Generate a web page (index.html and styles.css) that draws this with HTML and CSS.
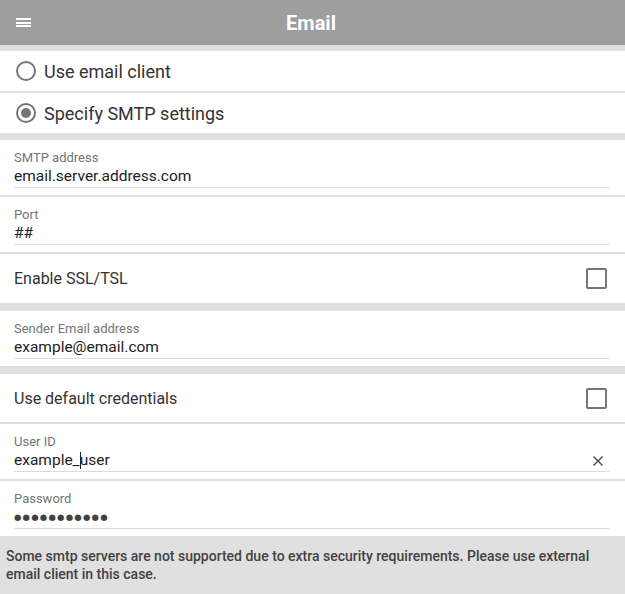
FILE: index.html
```html
<!DOCTYPE html>
<html>
<head>
<meta charset="utf-8">
<title>Email</title>
<link rel="stylesheet" href="styles.css">
</head>
<body>
<div class="app">
  <div class="topbar">
    <span class="menu"><i></i><i></i><i></i></span>
    <h1>Email</h1>
  </div>

  <div class="group first">
    <label class="radio-row"><span class="radio"></span>Use email client</label>
    <label class="radio-row"><span class="radio on"></span>Specify SMTP settings</label>
  </div>

  <div class="group tight">
    <div class="field">
      <div class="lbl">SMTP address</div>
      <div class="val">email.server.address.com</div>
    </div>
    <div class="field">
      <div class="lbl">Port</div>
      <div class="val">##</div>
    </div>
    <div class="check-row">Enable SSL/TSL<span class="box"></span></div>
  </div>

  <div class="group">
    <div class="field">
      <div class="lbl">Sender Email address</div>
      <div class="val">example@email.com</div>
    </div>
  </div>

  <div class="group">
    <div class="check-row short">Use default credentials<span class="box"></span></div>
    <div class="field">
      <div class="lbl">User ID</div>
      <div class="val">example_<span class="caret"></span>user<span class="clear">
        <svg width="10" height="10" viewBox="0 0 10 10"><path d="M0.5 0.5L9.5 9.5M9.5 0.5L0.5 9.5" stroke="#424242" stroke-width="1.3"/></svg>
      </span></div>
    </div>
    <div class="field">
      <div class="lbl">Password</div>
      <div class="val dots">●●●●●●●●●●●</div>
    </div>
  </div>

  <div class="note">Some smtp servers are not supported due to extra security requirements. Please use external email client in this case.</div>
</div>
</body>
</html>
```

FILE: styles.css
```css
body{margin:0;background:#e0e0e0;font-family:Roboto,"Noto Sans",sans-serif;color:#212121;}
.app{width:625px;height:594px;display:flex;flex-direction:column;background:#e0e0e0;}

.topbar{height:45px;background:#9e9e9e;display:flex;align-items:center;position:relative;}
.topbar h1{flex:1;margin:0;text-align:center;color:#fff;font-size:20px;font-weight:700;padding-right:3px;}
.menu{position:absolute;left:16px;top:18px;width:15px;height:9px;display:flex;flex-direction:column;justify-content:space-between;}
.menu i{display:block;height:2px;background:#fff;}

.group{display:flex;flex-direction:column;gap:2px;margin-top:8px;}
.group.first{margin-top:6px;}
.group.tight{margin-top:7px;}

.radio-row{height:40px;background:#fff;display:flex;align-items:center;padding-left:16px;font-size:18px;color:#333;}
.radio{width:16px;height:16px;border:2px solid #757575;border-radius:50%;margin-right:8px;position:relative;}
.radio.on:after{content:"";position:absolute;left:3px;top:3px;width:10px;height:10px;border-radius:50%;background:#757575;}

.field{background:#fff;height:55px;padding:0 16px 0 14px;box-sizing:border-box;}
.lbl{font-size:13px;line-height:16px;color:#757575;padding-top:10px;}
.val{font-size:15.5px;line-height:21px;color:#222;border-bottom:1px solid #dcdcdc;position:relative;}
.dots{font-family:"DejaVu Sans",sans-serif;font-size:8.5px;letter-spacing:1.2px;color:#424242;}
.caret{display:inline-block;width:1px;height:17px;background:#212121;vertical-align:-4px;margin-right:-1px;}
.clear{position:absolute;right:6px;top:6px;line-height:0;}

.check-row{height:49px;background:#fff;display:flex;align-items:center;justify-content:space-between;padding:0 18px 0 14px;font-size:16px;color:#333;}
.check-row.short{height:48px;}
.box{width:17px;height:17px;border:2px solid #757575;border-radius:2px;}

.note{flex:1;padding:11px 8px 0 6px;font-size:14px;line-height:18px;font-weight:500;color:#424242;}
```
